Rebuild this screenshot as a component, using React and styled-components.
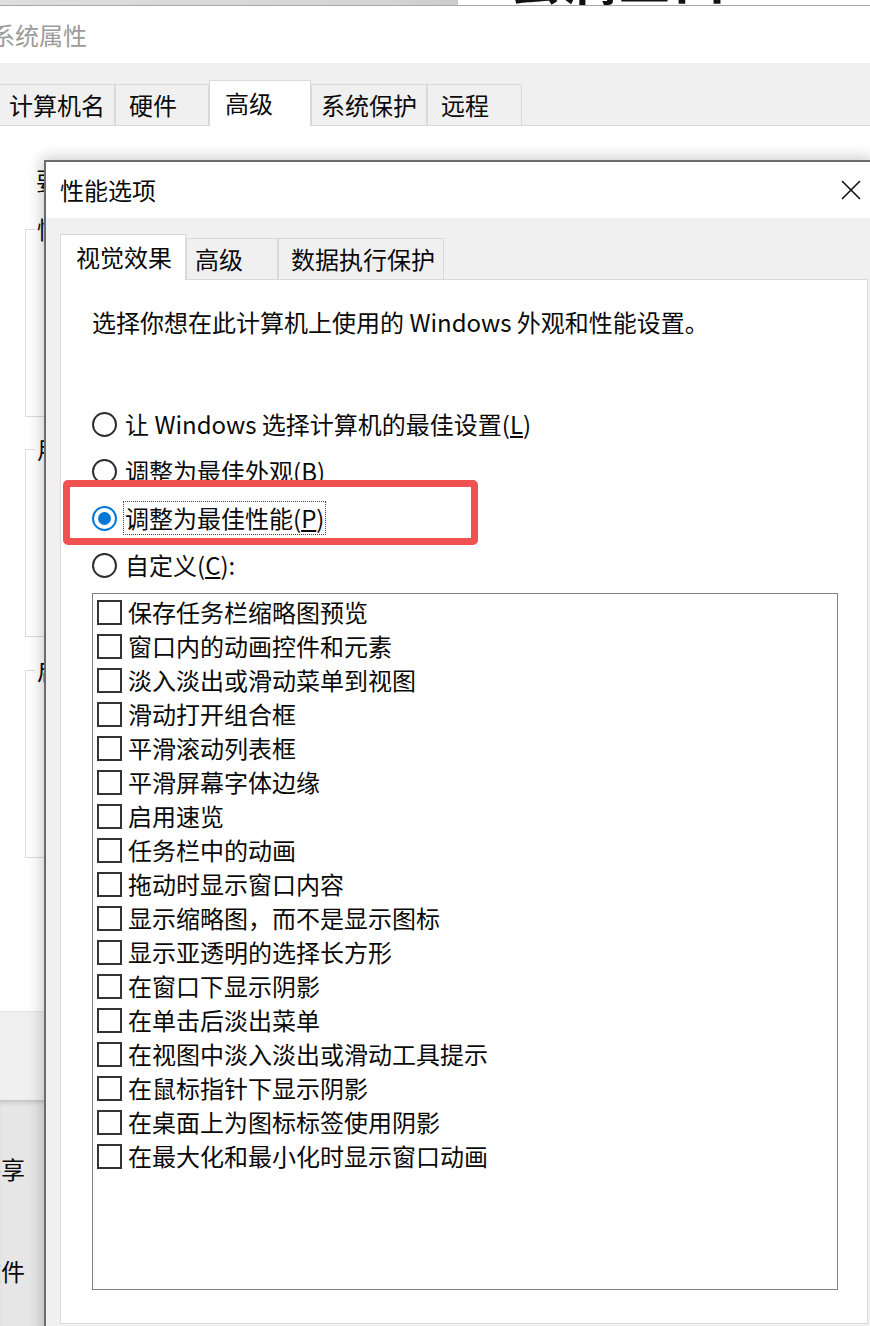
import styled, { createGlobalStyle } from 'styled-components'

const GlobalStyle = createGlobalStyle`
  html, body {
    margin: 0;
    padding: 0;
    background: #e5e5e5;
  }
  body {
    font-family: "Noto Sans CJK SC", "Noto Sans", "Liberation Sans", sans-serif;
  }
`

const Screen = styled.div`
  position: relative;
  width: 870px;
  height: 1326px;
  overflow: hidden;
  background: #e5e5e5;
  color: #0a0a0a;
  font-size: 24px;
`

/* ---- strip of the window above, cut off by the top edge ---- */
const TopStrip = styled.div`
  display: flex;
  height: 5px;
  border-bottom: 1px solid #a9a9a9;
  overflow: hidden;
`
const StripGray = styled.div`
  width: 458px;
  background: linear-gradient(90deg, #dedede, #d4d4d4 85%, #cbcbcb);
`
const StripWhite = styled.div`
  flex: 1;
  background: #fff;
  padding-left: 50px;
  overflow: hidden;
`
const CutTitle = styled.div`
  font-size: 53px;
  line-height: 54px;
  font-weight: 700;
  letter-spacing: 2px;
  margin-top: -50px;
  color: #111;
  white-space: nowrap;
`

/* ---- 系统属性 window behind ---- */
const SysTitleBar = styled.div`
  height: 57px;
  background: #fff;
  display: flex;
  align-items: center;
  color: #9b9b9b;
  span { margin-left: -9px; }
`
const SysBody = styled.div`
  background: #f0f0f0;
  padding-top: 16px;
`
const SysTabRow = styled.div`
  display: flex;
  align-items: flex-end;
  height: 46px;
  margin-left: -4px;
  border-bottom: 1px solid #d9d9d9;
`
const Tab = styled.div`
  box-sizing: border-box;
  width: ${p => p.$w}px;
  height: ${p => (p.$active ? 46 : 41)}px;
  padding-left: ${p => p.$pl}px;
  display: flex;
  align-items: center;
  background: ${p => (p.$active ? '#fff' : '#f0f0f0')};
  border: 1px solid #d9d9d9;
  border-bottom: none;
  margin-bottom: ${p => (p.$active ? -1 : 0)}px;
  padding-bottom: ${p => (p.$active ? 2 : 0)}px;
  position: relative;
  z-index: ${p => (p.$active ? 1 : 0)};
  line-height: 34px;
  white-space: nowrap;
`
const SysPanel = styled.div`
  box-sizing: border-box;
  height: 885px;
  background: #fff;
  padding-top: 37px;
`
const Notice = styled.div`
  margin-left: 36px;
  line-height: 34px;
  margin-bottom: 17px;
  white-space: nowrap;
`
const Group = styled.fieldset`
  box-sizing: border-box;
  height: 203px;
  margin: 0 0 ${p => p.$gap}px 25px;
  padding: 0;
  border: 1px solid #dcdcdc;
  legend {
    margin-left: 9px;
    padding: 0 2px;
    line-height: 30px;
  }
`
const SysFooter = styled.div`
  height: 88px;
  background: #f0f0f0;
  border-top: 1px solid #e2e2e2;
`
const LowerWindow = styled.div`
  height: 228px;
  background: #e6e6e6;
  box-shadow: inset 0 5px 5px -3px rgba(0, 0, 0, 0.18);
  padding-top: 52px;
  box-sizing: border-box;
  display: flex;
  flex-direction: column;
  gap: 68px;
`
const SideItem = styled.div`
  margin-left: -23px;
  line-height: 34px;
`

/* ---- 性能选项 dialog on top ---- */
const PerfDialog = styled.div`
  position: absolute;
  left: 44px;
  top: 160px;
  width: 828px;
  height: 1180px;
  border-left: 2px solid #6c6c6c;
  border-top: 2px solid #6c6c6c;
  background: #f0f0f0;
  box-shadow: -2px -2px 14px rgba(0, 0, 0, 0.22);
`
const PerfTitleBar = styled.div`
  box-sizing: border-box;
  height: 56px;
  background: #fff;
  display: flex;
  align-items: center;
  justify-content: space-between;
  padding: 0 13px 2px 14px;
`
const CloseButton = styled.div`
  display: flex;
  width: 20px;
  height: 20px;
  margin-top: 2px;
`
const PerfBody = styled.div`
  padding: 16px 0 0 14px;
`
const PerfTabRow = styled.div`
  display: flex;
  align-items: flex-end;
  height: 45px;
`
const TabPanel = styled.div`
  position: relative;
  box-sizing: border-box;
  width: 808px;
  height: 1045px;
  background: #fff;
  border: 1px solid #d9d9d9;
  padding: 25px 0 0 31px;
`
const Intro = styled.div`
  line-height: 34px;
  white-space: nowrap;
  margin-bottom: 61px;
`
const RadioList = styled.div`
  display: flex;
  flex-direction: column;
  margin-bottom: 5px;
`
const RadioRow = styled.div`
  height: 47px;
  display: flex;
  align-items: center;
`
const RadioCircle = styled.span`
  box-sizing: border-box;
  width: 25px;
  height: 25px;
  margin-top: 2px;
  border-radius: 50%;
  border: 2px solid ${p => (p.$on ? '#0078d7' : '#2e2e2e')};
  display: flex;
  align-items: center;
  justify-content: center;
  flex-shrink: 0;
  &::after {
    content: '';
    display: ${p => (p.$on ? 'block' : 'none')};
    width: 13px;
    height: 13px;
    border-radius: 50%;
    background: #0078d7;
  }
`
const RadioLabel = styled.span`
  margin-left: 7px;
  line-height: 32px;
  padding: 0 1px;
  white-space: nowrap;
  outline: ${p => (p.$focus ? '1px dotted #444' : 'none')};
`
const Highlight = styled.div`
  position: absolute;
  left: 2px;
  top: 200px;
  width: 415px;
  height: 65px;
  box-sizing: border-box;
  border: 7px solid #f05252;
  border-radius: 5px;
  pointer-events: none;
`
const ListBox = styled.div`
  box-sizing: border-box;
  width: 746px;
  height: 697px;
  border: 1px solid #828282;
  padding: 0 0 0 4px;
`
const CheckRow = styled.div`
  height: 34px;
  display: flex;
  align-items: center;
  white-space: nowrap;
`
const CheckBox = styled.span`
  box-sizing: border-box;
  width: 25px;
  height: 25px;
  margin-top: 2px;
  border: 2px solid #333;
  background: #fff;
  margin-right: 6px;
  flex-shrink: 0;
`

const radios = [
  { text: '让 Windows 选择计算机的最佳设置(', key: 'L', end: ')' },
  { text: '调整为最佳外观(', key: 'B', end: ')' },
  { text: '调整为最佳性能(', key: 'P', end: ')', on: true },
  { text: '自定义(', key: 'C', end: '):' },
]

const effects = [
  '保存任务栏缩略图预览',
  '窗口内的动画控件和元素',
  '淡入淡出或滑动菜单到视图',
  '滑动打开组合框',
  '平滑滚动列表框',
  '平滑屏幕字体边缘',
  '启用速览',
  '任务栏中的动画',
  '拖动时显示窗口内容',
  '显示缩略图，而不是显示图标',
  '显示亚透明的选择长方形',
  '在窗口下显示阴影',
  '在单击后淡出菜单',
  '在视图中淡入淡出或滑动工具提示',
  '在鼠标指针下显示阴影',
  '在桌面上为图标标签使用阴影',
  '在最大化和最小化时显示窗口动画',
]

function App() {
  return (
    <Screen>
      <GlobalStyle />
      <TopStrip>
        <StripGray />
        <StripWhite>
          <CutTitle>会满三口</CutTitle>
        </StripWhite>
      </TopStrip>

      <SysTitleBar><span>系统属性</span></SysTitleBar>
      <SysBody>
        <SysTabRow>
          <Tab $w={119} $pl={12}>计算机名</Tab>
          <Tab $w={94} $pl={13}>硬件</Tab>
          <Tab $w={102} $pl={15} $active>高级</Tab>
          <Tab $w={116} $pl={9}>系统保护</Tab>
          <Tab $w={95} $pl={13}>远程</Tab>
        </SysTabRow>
        <SysPanel>
          <Notice>要进行大多数更改，你必须作为管理员登录。</Notice>
          <Group $gap={17}><legend>性能</legend></Group>
          <Group $gap={18}><legend>用户配置文件</legend></Group>
          <Group $gap={0}><legend>启动和故障恢复</legend></Group>
        </SysPanel>
        <SysFooter />
      </SysBody>
      <LowerWindow>
        <SideItem>共享</SideItem>
        <SideItem>文件</SideItem>
      </LowerWindow>

      <PerfDialog>
        <PerfTitleBar>
          <span>性能选项</span>
          <CloseButton>
            <svg width="20" height="20" viewBox="0 0 20 20">
              <path d="M1 1 L19 19 M19 1 L1 19" stroke="#111" strokeWidth="1.6" fill="none" />
            </svg>
          </CloseButton>
        </PerfTitleBar>
        <PerfBody>
          <PerfTabRow>
            <Tab $w={126} $pl={15} $active>视觉效果</Tab>
            <Tab $w={92} $pl={8}>高级</Tab>
            <Tab $w={166} $pl={12}>数据执行保护</Tab>
          </PerfTabRow>
          <TabPanel>
            <Intro>选择你想在此计算机上使用的 Windows 外观和性能设置。</Intro>
            <RadioList>
              {radios.map(r => (
                <RadioRow key={r.key}>
                  <RadioCircle $on={r.on} />
                  <RadioLabel $focus={r.on}>
                    {r.text}<u>{r.key}</u>{r.end}
                  </RadioLabel>
                </RadioRow>
              ))}
            </RadioList>
            <Highlight />
            <ListBox>
              {effects.map(e => (
                <CheckRow key={e}>
                  <CheckBox />
                  {e}
                </CheckRow>
              ))}
            </ListBox>
          </TabPanel>
        </PerfBody>
      </PerfDialog>
    </Screen>
  )
}

export default App
